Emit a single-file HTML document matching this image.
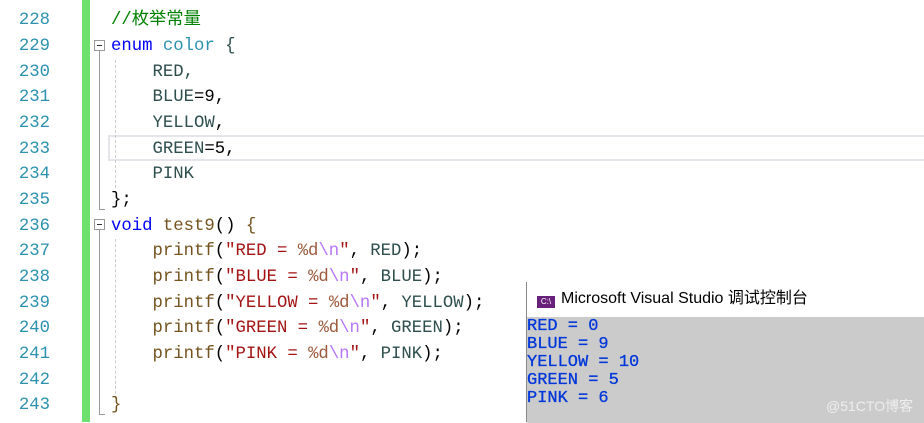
<!DOCTYPE html><html><head><style>
body{margin:0;width:924px;height:422px;overflow:hidden;background:#fff;position:relative;font-family:"Liberation Mono","Noto Sans CJK SC",monospace}
.ln{position:absolute;left:0;width:50px;text-align:right;color:#2b91af;font-size:17.3px;line-height:25.67px;margin-top:2px}
.c{position:absolute;left:111px;font-size:17.3px;line-height:25.67px;color:#2f4f4f;white-space:pre;margin-top:2px}
.k{color:#0000ff}.t{color:#2b91af}.f{color:#74531f}.s{color:#a31515}.e{color:#b776fb}.p{color:#9b5a3c}.g{color:#008000}.d{color:#000}
.bar{position:absolute;left:82px;top:0;width:8px;height:422px;background:#6ee06e}
.fold{position:absolute;left:94px;width:9px;height:9px;border:1px solid #999;background:#fff}
.fold:after{content:"";position:absolute;left:2px;top:4px;width:5px;height:1px;background:#333}
.vl{position:absolute;left:99px;width:1px;background:#999}
.dash{position:absolute;left:115px;width:0;border-left:1px dashed #ccc}
.con{position:absolute;left:526px;top:282px;width:398px;height:140px;border-left:1px solid #888}
.ct{height:35px;background:#fff;font-family:"Liberation Sans","Noto Sans CJK SC",sans-serif;font-size:16px;line-height:33px;color:#000}
.cb{background:#cbcbcb;height:105px;color:#0037da;font-size:17px;line-height:18px;padding-top:1px;white-space:pre;-webkit-text-stroke:0.3px #0037da}
</style></head><body>
<div class="bar"></div>
<div style="position:absolute;left:108px;top:135px;width:820px;height:22px;border:2px solid #e4e4ea"></div>
<div class="ln" style="top:-18px">227</div>
<div class="ln" style="top:6px">228</div><div class="ln" style="top:32px">229</div><div class="ln" style="top:58px">230</div><div class="ln" style="top:83px">231</div><div class="ln" style="top:109px">232</div><div class="ln" style="top:135px">233</div><div class="ln" style="top:160px">234</div><div class="ln" style="top:186px">235</div><div class="ln" style="top:212px">236</div><div class="ln" style="top:237px">237</div><div class="ln" style="top:263px">238</div><div class="ln" style="top:289px">239</div><div class="ln" style="top:314px">240</div><div class="ln" style="top:340px">241</div><div class="ln" style="top:366px">242</div><div class="ln" style="top:391px">243</div>
<div class="fold" style="top:40px"></div><div class="vl" style="top:51px;height:159px"></div><div style="position:absolute;left:99px;top:209px;width:6px;height:1px;background:#999"></div>
<div class="fold" style="top:219px"></div><div class="vl" style="top:230px;height:185px"></div><div style="position:absolute;left:99px;top:414px;width:6px;height:1px;background:#999"></div>
<div class="dash" style="top:60px;height:128px"></div><div class="dash" style="top:239px;height:160px"></div>
<div class="c" style="top:6px"><span class="g">//枚举常量</span></div>
<div class="c" style="top:32px"><span class="k">enum</span> <span class="t">color</span> {</div>
<div class="c" style="top:58px">    RED,</div>
<div class="c" style="top:83px">    BLUE<span class="d">=9,</span></div>
<div class="c" style="top:109px">    YELLOW<span class="d">,</span></div>
<div class="c" style="top:135px">    GREEN<span class="d">=5,</span></div>
<div class="c" style="top:160px">    PINK</div>
<div class="c" style="top:186px"><span class="d">};</span></div>
<div class="c" style="top:212px"><span class="k">void</span> <span class="f">test9</span><span class="d">()</span> <span class="f">{</span></div>
<div class="c" style="top:237px">    <span class="f">printf</span><span class="d">(</span><span class="s">"RED = </span><span class="p">%d</span><span class="e">\n</span><span class="s">"</span><span class="d">,</span> RED<span class="d">);</span></div>
<div class="c" style="top:263px">    <span class="f">printf</span><span class="d">(</span><span class="s">"BLUE = </span><span class="p">%d</span><span class="e">\n</span><span class="s">"</span><span class="d">,</span> BLUE<span class="d">);</span></div>
<div class="c" style="top:289px">    <span class="f">printf</span><span class="d">(</span><span class="s">"YELLOW = </span><span class="p">%d</span><span class="e">\n</span><span class="s">"</span><span class="d">,</span> YELLOW<span class="d">);</span></div>
<div class="c" style="top:314px">    <span class="f">printf</span><span class="d">(</span><span class="s">"GREEN = </span><span class="p">%d</span><span class="e">\n</span><span class="s">"</span><span class="d">,</span> GREEN<span class="d">);</span></div>
<div class="c" style="top:340px">    <span class="f">printf</span><span class="d">(</span><span class="s">"PINK = </span><span class="p">%d</span><span class="e">\n</span><span class="s">"</span><span class="d">,</span> PINK<span class="d">);</span></div>
<div class="c" style="top:391px"><span class="f">}</span></div>
<div class="con"><div class="ct"><span style="display:inline-block;width:18px;height:12px;background:#68217a;margin:0 6px 0 10px;vertical-align:-1px;color:#fff;font-size:8px;line-height:12px;text-align:center">C:\</span>Microsoft Visual Studio 调试控制台</div>
<div class="cb">RED = 0
BLUE = 9
YELLOW = 10
GREEN = 5
PINK = 6</div></div>
<div style="position:absolute;left:826px;top:396px;color:#eee;font-family:'Liberation Sans','Noto Sans CJK SC',sans-serif;font-size:14px">@51CTO博客</div>
</body></html>
